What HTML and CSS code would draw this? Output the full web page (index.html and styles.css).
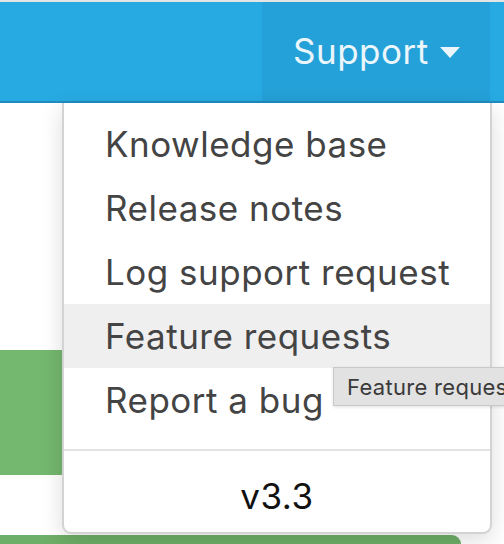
FILE: index.html
```html
<!DOCTYPE html>
<html>
<head>
<meta charset="utf-8">
<link rel="stylesheet" href="styles.css">
</head>
<body>
<div class="topstrip"></div>
<header class="header">
  <div class="support-btn">
    <span class="support-label">Support</span>
    <svg class="caret" width="20" height="11" viewBox="0 0 20 11"><path d="M0 0 H20 L10 11 Z" fill="#eaf6fc"/></svg>
  </div>
  <div class="header-end"></div>
</header>
<main class="content">
  <div class="card card-a"></div>
  <div class="card card-b"></div>
</main>
<div class="menu">
  <ul class="menu-list">
    <li class="menu-item">Knowledge base</li>
    <li class="menu-item">Release notes</li>
    <li class="menu-item">Log support request</li>
    <li class="menu-item is-hover">Feature requests</li>
    <li class="menu-item">Report a bug</li>
  </ul>
  <div class="menu-version">v3.3</div>
</div>
<div class="tooltip">Feature requests</div>
</body>
</html>
```
FILE: styles.css
```css
* { box-sizing: border-box; }
html, body { margin: 0; padding: 0; }
body {
  width: 504px;
  height: 544px;
  overflow: hidden;
  background: #ffffff;
  font-family: Inter, "Noto Sans", "Liberation Sans", sans-serif;
  position: relative;
}
.topstrip { height: 2px; background: #e4e4e4; }
.header {
  height: 101px;
  background: #27aae2;
  border-bottom: 2px solid #1f8cc0;
  display: flex;
  justify-content: flex-end;
}
.support-btn {
  width: 228px;
  background: #24a1d8;
  display: flex;
  align-items: center;
  padding-left: 31px;
  gap: 11px;
  padding-bottom: 2px;
}
.support-label {
  color: #eaf6fc;
  font-size: 35px;
  letter-spacing: 0.5px;
}
.caret { margin-top: 3px; }
.header-end { width: 14px; }
.content {
  padding-top: 247px;
  display: flex;
  flex-direction: column;
}
.card { background: #74b76e; }
.card-a { width: 300px; height: 125px; }
.card-b { width: 461px; height: 9px; margin-top: 60px; border-radius: 0 12px 0 0; background: #6dae68; }
.menu {
  position: absolute;
  left: 62px;
  top: 103px;
  width: 430px;
  height: 431px;
  background: #fff;
  border: 2px solid #d3d3d3;
  border-top: none;
  border-radius: 0 0 9px 9px;
  box-shadow: 0 6px 22px rgba(0,0,0,0.14);
  display: flex;
  flex-direction: column;
}
.menu-list {
  list-style: none;
  margin: 0;
  padding: 9px 0 0 0;
  border-bottom: 2px solid #e2e2e2;
  padding-bottom: 17px;
}
.menu-item {
  height: 64px;
  display: flex;
  align-items: center;
  padding-left: 41px;
  font-size: 35px;
  color: #444444;
  letter-spacing: 0.5px;
}
.menu-item.is-hover { background: #efefef; }
.menu-version {
  flex: 1;
  display: flex;
  align-items: center;
  justify-content: center;
  font-size: 35px;
  letter-spacing: 0.5px;
  color: #111;
  padding-top: 8px;
}
.tooltip {
  position: absolute;
  left: 333px;
  top: 367px;
  height: 39px;
  padding: 0 0 0 13px;
  background: #e2e2e2;
  border: 1px solid #c9c9c9;
  color: #3a3a3a;
  font-size: 22px;
  letter-spacing: 0.3px;
  display: flex;
  align-items: center;
  white-space: nowrap;
  box-shadow: 0 1px 3px rgba(0,0,0,0.12);
}
```
